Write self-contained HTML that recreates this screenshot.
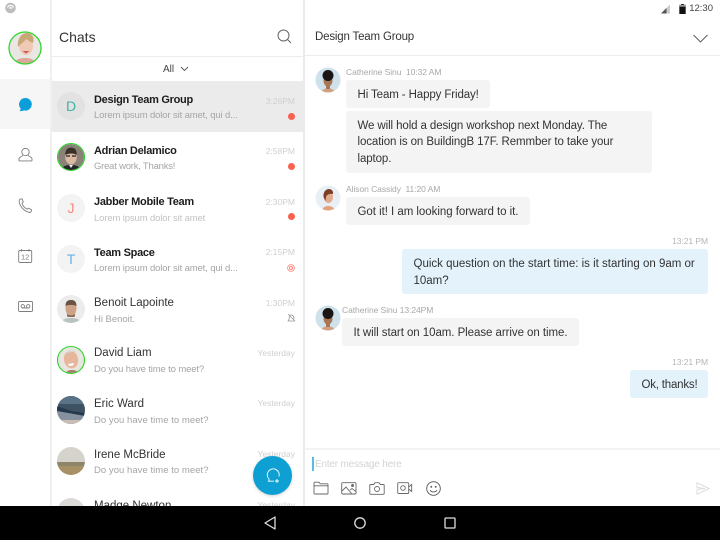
<!DOCTYPE html>
<html><head><meta charset="utf-8">
<style>
html,body{margin:0;padding:0}
body{width:720px;height:540px;overflow:hidden;background:#fff;position:relative;font-family:"Liberation Sans",sans-serif;color:#222}
.a{position:absolute;white-space:nowrap}
.n{position:absolute;left:94px;font-size:11.5px;line-height:14px;white-space:nowrap;color:#333;letter-spacing:0}
.b{font-weight:bold;font-size:11px;color:#1c1c1c;letter-spacing:-.28px}
.s{position:absolute;left:94px;font-size:9.5px;line-height:12px;color:#a5a5a5;white-space:nowrap;letter-spacing:-.02px}
.t{position:absolute;right:425px;font-size:8.5px;line-height:12px;color:#cfcfcf;white-space:nowrap}
.d{position:absolute;left:288px;width:7px;height:7px;border-radius:50%;background:#f8604f}
.l{position:absolute;left:57px;width:28px;height:28px;border-radius:50%;background:#f3f3f3;text-align:center;line-height:29px;font-size:14px}
.bub{position:absolute;background:#f4f4f4;border-radius:3px;font-size:11.5px;line-height:17px;color:#333;letter-spacing:-.08px;white-space:nowrap;box-sizing:border-box;padding:6.5px 11.5px}
.me{background:#e3f2fb}
.m{position:absolute;font-size:8.5px;line-height:11px;color:#a8a8a8;white-space:nowrap;letter-spacing:-.06px}
svg{position:absolute;overflow:visible}
.ic{fill:none;stroke:#7d7d7d;stroke-width:.9}
</style></head><body>

<!-- panels -->
<div class="a" style="left:0;top:79px;width:50px;height:50px;background:#f6f6f6"></div>
<div class="a" style="left:51px;top:81px;width:253px;height:51px;background:#ebebeb"></div>
<div class="a" style="left:50px;top:0;width:2px;height:506px;background:#f0f0f0"></div>
<div class="a" style="left:303px;top:0;width:2px;height:506px;background:#ebebeb"></div>
<div class="a" style="left:51px;top:56px;width:253px;height:1px;background:#ececec"></div>
<div class="a" style="left:305px;top:55px;width:415px;height:1px;background:#ececec"></div>
<div class="a" style="left:305px;top:448px;width:415px;height:2px;background:#f3f3f3"></div>

<!-- top-left status icon -->
<svg style="left:5px;top:2px" width="12" height="12" viewBox="0 0 12 12"><circle cx="5.500" cy="6" r="5.300" fill="#bdbdbd"/><path d="M2.500 5.500a3.200 3.200 0 0 1 6 0M4.500 6.500a1.400 1.400 0 0 1 2.500 0" fill="none" stroke="#fff" stroke-width="1.200"/></svg>

<!-- self avatar -->
<svg style="left:8px;top:31px" width="34" height="34" viewBox="0 0 34 34"><defs><clipPath id="c0"><circle cx="17" cy="17" r="15.500"/></clipPath></defs><g clip-path="url(#c0)"><rect width="34" height="34" fill="#e9e6e4"/><path d="M6 34c1-6 6-7 11-7s10 1 11 7z" fill="#dca79a"/><ellipse cx="18" cy="15" rx="7" ry="9" fill="#efc9b3"/><path d="M10 16c-1-9 4-14 9-14s8 5 6 10c-3-1-5-3-7-4-1 3-5 4-8 8z" fill="#c9a878"/><path d="M14.500 20h7l-3.500 2.500z" fill="#c85a5a"/></g><circle cx="17" cy="17" r="16" fill="none" stroke="#2fd42f" stroke-width="1.300"/></svg>

<!-- nav icons -->
<svg style="left:18px;top:97px" width="15" height="15" viewBox="0 0 15 15"><path d="M7.500 1a6.300 6.300 0 0 1 6.300 6.300A6.300 6.300 0 0 1 6 13.400c-1 .5-3 1-4.500.6.700-.7 1.200-1.600 1.200-2.500A6.300 6.300 0 0 1 7.500 1z" fill="#0b9ed8"/></svg>
<svg class="ic" style="left:18px;top:147px" width="15" height="15" viewBox="0 0 15 15"><circle cx="7.500" cy="5" r="3.700"/><path d="M5 8.300c-.3 1-3.500 1.300-4 3.300v1.800c0 .3.200.5.500.5h12c.3 0 .5-.2.500-.5v-1.800c-.5-2-3.700-2.300-4-3.300"/></svg>
<svg class="ic" style="left:18px;top:198px" width="15" height="15" viewBox="0 0 15 15"><path d="M2 1.200 4 .8c.5 1 1 2.300 1.300 3.200L4 5.200c.8 2.500 2.700 4.700 5.200 6l1.300-1.100c1 .5 2.300 1.200 3.200 1.900-.2 1-.7 2.200-1.700 2.500C6.500 13.800 1 8 1.200 2.500c0-.5.300-1 .8-1.300z"/></svg>
<svg class="ic" style="left:18px;top:249px" width="15" height="14" viewBox="0 0 15 14"><rect x=".7" y="1.500" width="13" height="12" rx="1.200"/><path d="M3.500 0v2.500M11 0v2.500"/><text x="7.200" y="10.500" font-size="7.500" text-anchor="middle" fill="#7d7d7d" stroke="none" font-family="Liberation Sans">12</text></svg>
<svg class="ic" style="left:18px;top:301px" width="15" height="11" viewBox="0 0 15 11"><rect x=".5" y=".5" width="14" height="10" rx="1.200"/><circle cx="4.800" cy="5.300" r="1.700"/><circle cx="10.200" cy="5.300" r="1.700"/><path d="M4.800 7h5.400"/></svg>

<!-- list header -->
<div class="a" style="left:59px;top:28px;font-size:14px;line-height:18px;color:#333;letter-spacing:0">Chats</div>
<svg style="left:277px;top:29px" width="15" height="15" viewBox="0 0 15 15" fill="none" stroke="#666" stroke-width="1"><circle cx="6.500" cy="6.500" r="5.500"/><path d="M10.500 10.500l3.500 3.500"/></svg>
<div class="a" style="left:163px;top:64px;font-size:10px;line-height:12px;color:#444">All</div>
<svg style="left:180px;top:66px" width="9" height="6" viewBox="0 0 9 6" fill="none" stroke="#555" stroke-width=".9"><path d="M1 1l3.500 3.500L8 1"/></svg>

<!-- rows -->
<div class="l" style="top:92px;background:#e2e2e2;color:#3fb3a6">D</div>
<div class="n b" style="top:93px">Design Team Group</div><div class="s" style="top:110px;letter-spacing:-.13px">Lorem ipsum dolor sit amet, qui d...</div><div class="t" style="top:95px">3:26PM</div><div class="d" style="top:113px"></div>

<svg style="left:57px;top:143px" width="28" height="28" viewBox="0 0 28 28"><defs><clipPath id="c1"><circle cx="14" cy="14" r="13"/></clipPath></defs><g clip-path="url(#c1)"><rect width="28" height="28" fill="#8a8178"/><path d="M4 28c1-5 5-6 10-6s9 1 10 6z" fill="#23252a"/><path d="M12 22l2 3 2-3z" fill="#eee"/><ellipse cx="14" cy="14" rx="5.800" ry="7.500" fill="#dbb8a3"/><path d="M8.200 12c0-6 3-7.500 6-7.500s5.600 1.500 5.600 7.500c-3-2-8-2-11.600 0z" fill="#3a302a"/><path d="M9 13h4M15 13h4" stroke="#222" stroke-width="1.200"/></g><circle cx="14" cy="14" r="13.500" fill="none" stroke="#2fd42f" stroke-width="1.100"/></svg>
<div class="n b" style="top:144px">Adrian Delamico</div><div class="s" style="top:161px;letter-spacing:-.22px">Great work, Thanks!</div><div class="t" style="top:145px">2:58PM</div><div class="d" style="top:163px"></div>

<div class="l" style="top:194px;color:#f58a7c">J</div>
<div class="n b" style="top:195px">Jabber Mobile Team</div><div class="s" style="top:212.500px;color:#c3c3c3;letter-spacing:-.13px">Lorem ipsum dolor sit amet</div><div class="t" style="top:196px">2:30PM</div><div class="d" style="top:213px"></div>

<div class="l" style="top:245px;color:#62b6e6">T</div>
<div class="n b" style="top:245.500px">Team Space</div><div class="s" style="top:263px;letter-spacing:-.13px">Lorem ipsum dolor sit amet, qui d...</div><div class="t" style="top:246px">2:15PM</div>
<svg style="left:286.500px;top:264px" width="8" height="8" viewBox="0 0 8 8" fill="none" stroke="#f77f73"><circle cx="4" cy="4" r="3.400" stroke-width=".8"/><circle cx="4" cy="4" r="1.500" stroke-width=".9"/></svg>

<svg style="left:57px;top:295px" width="28" height="28" viewBox="0 0 28 28"><defs><clipPath id="c2"><circle cx="14" cy="14" r="14"/></clipPath></defs><g clip-path="url(#c2)"><rect width="28" height="28" fill="#ececec"/><path d="M4 28c1-4 5-5 10-5s9 1 10 5z" fill="#b9c3c2"/><ellipse cx="14" cy="13" rx="5.500" ry="8" fill="#cda287"/><path d="M8.500 11c0-5 2.500-6 5.500-6s5.500 1 5.500 6c-3-1.500-8-1.500-11 0z" fill="#6a5244"/><path d="M9.500 18c1 3 8 3 9 0l-1 4h-7z" fill="#8b6b58"/></g></svg>
<div class="n" style="top:296px">Benoit Lapointe</div><div class="s" style="top:313.500px">Hi Benoit.</div><div class="t" style="top:297px">1:30PM</div>
<svg style="left:287px;top:313px" width="9" height="9" viewBox="0 0 9 9" fill="none" stroke="#999" stroke-width=".8"><path d="M1 8h6.500L6.800 6.800V4.500a2.500 2.500 0 0 0-4-2L1.800 6.800zM1 1l7 7"/></svg>

<svg style="left:57px;top:346px" width="28" height="28" viewBox="0 0 28 28"><defs><clipPath id="c3"><circle cx="14" cy="14" r="13"/></clipPath></defs><g clip-path="url(#c3)"><rect width="28" height="28" fill="#e9e5df"/><path d="M8 28c1-3 4-4 7-4s6 1 7 4z" fill="#a87f6c"/><ellipse cx="14" cy="13.500" rx="7" ry="9" transform="rotate(-12 14 13.500)" fill="#e6b79c"/><path d="M8 8c2-4 8-5 11-2-4 0-8 0-11 2z" fill="#d9d5cf"/><path d="M11 18l6-1-1 2.500-4 .5z" fill="#fff"/></g><circle cx="14" cy="14" r="13.500" fill="none" stroke="#2fd42f" stroke-width="1.100"/></svg>
<div class="n" style="top:346px">David Liam</div><div class="s" style="top:363.500px;letter-spacing:-.14px">Do you have time to meet?</div><div class="t" style="top:347px">Yesterday</div>

<svg style="left:57px;top:396px" width="28" height="28" viewBox="0 0 28 28"><defs><clipPath id="c4"><circle cx="14" cy="14" r="14"/></clipPath></defs><g clip-path="url(#c4)"><rect width="28" height="28" fill="#3f5263"/><rect width="28" height="8" fill="#5a7286"/><path d="M0 13l10 2 18 3v10H0z" fill="#8691a0"/><path d="M0 10l14 5 14 2v3L0 15z" fill="#24394c"/><rect y="24" width="28" height="4" fill="#cabdb5"/></g></svg>
<div class="n" style="top:397px">Eric Ward</div><div class="s" style="top:414.500px;letter-spacing:.04px">Do you have time to meet?</div><div class="t" style="top:397px">Yesterday</div>

<svg style="left:57px;top:447px" width="28" height="28" viewBox="0 0 28 28"><defs><clipPath id="c5"><circle cx="14" cy="14" r="14"/></clipPath></defs><g clip-path="url(#c5)"><rect width="28" height="28" fill="#d6d2cc"/><rect y="15" width="28" height="4" fill="#8e8568"/><rect y="19" width="28" height="9" fill="#a78f66"/></g></svg>
<div class="n" style="top:448px">Irene McBride</div><div class="s" style="top:465px;letter-spacing:.04px">Do you have time to meet?</div><div class="t" style="top:448px">Yesterday</div>

<div class="l" style="top:498px;background:#dddbd8"></div>
<div class="n" style="top:499px">Madge Newton</div><div class="t" style="top:499px">Yesterday</div>

<!-- FAB -->
<div class="a" style="left:253px;top:456px;width:39px;height:39px;border-radius:50%;background:#0ea0d2;box-shadow:0 1px 3px rgba(0,0,0,.18)"></div>
<svg style="left:265px;top:468px" width="16" height="16" viewBox="0 0 16 16" fill="none" stroke="#fff" stroke-width=".9"><path d="M9 13.200H3.500c.6-.7.800-1.300.6-2A6 6 0 1 1 14 8.500M12 11v4M10 13h4"/></svg>

<!-- status -->
<svg style="left:661px;top:4px" width="10" height="10" viewBox="0 0 10 10"><path d="M0 9.500 9 .5v9z" fill="#ccc"/><path d="M0 9.500 5.500 4v5.500z" fill="#555"/></svg>
<svg style="left:679px;top:3.500px" width="7" height="10" viewBox="0 0 7 11"><path d="M2 0h3v1h2v10H0V1h2z" fill="#111"/><rect x="0" y="1" width="7" height="2" fill="#999"/></svg>
<div class="a" style="right:7px;top:3px;font-size:9.500px;line-height:12px;color:#444;letter-spacing:0">12:30</div>

<!-- conversation header -->
<div class="a" style="left:315px;top:30px;font-size:11.500px;line-height:14px;color:#333;letter-spacing:-.18px">Design Team Group</div>
<svg style="left:693px;top:34px" width="15" height="9" viewBox="0 0 15 9" fill="none" stroke="#555" stroke-width=".9"><path d="M.5 1l7 7 7-7"/></svg>

<!-- messages -->
<svg style="left:315px;top:67px" width="26" height="26" viewBox="0 0 26 26"><defs><clipPath id="c6"><circle cx="13" cy="13" r="12.500"/></clipPath></defs><g clip-path="url(#c6)"><rect width="26" height="26" fill="#cfe1ea"/><path d="M6 26c1-4 4-4.500 7-4.500s6 .5 7 4.500z" fill="#d2a07f"/><rect x="11" y="16" width="4" height="6" fill="#a87656"/><ellipse cx="13" cy="14" rx="4.500" ry="5.500" fill="#a87656"/><circle cx="13" cy="8.500" r="5.500" fill="#1b1513"/></g></svg>
<div class="m" style="left:346px;top:67px">Catherine Sinu&nbsp; 10:32 AM</div>
<div class="bub" style="left:346px;top:80px;width:144px;height:28px;letter-spacing:-.11px">Hi Team - Happy Friday!</div>
<div class="bub" style="left:346px;top:111px;width:306px;height:62px;line-height:16.900px;padding-top:6.500px;letter-spacing:-.1px">We will hold a design workshop next Monday. The<br>location is on BuildingB 17F. Remmber to take your<br>laptop.</div>

<svg style="left:315px;top:185px" width="26" height="26" viewBox="0 0 26 26"><defs><clipPath id="c7"><circle cx="13" cy="13" r="12.500"/></clipPath></defs><g clip-path="url(#c7)"><rect width="26" height="26" fill="#e8f0f5"/><path d="M7 26c1-4 3-5 6-5s6 1 7 5z" fill="#e0a27f"/><ellipse cx="13.500" cy="12" rx="4.500" ry="6" fill="#e3ab8b"/><path d="M8.500 12c-.5-6 3-8 5.500-8s4.500 2 4 5c-3-.5-6 0-7 3l-.5 4z" fill="#7b3f28"/></g></svg>
<div class="m" style="left:346px;top:184px">Alison Cassidy&nbsp; 11:20 AM</div>
<div class="bub" style="left:346px;top:197px;width:184px;height:28px;letter-spacing:-.04px">Got it! I am looking forward to it.</div>

<div class="m" style="right:12px;top:236px;color:#b5b5b5">13:21 PM</div>
<div class="bub me" style="left:402px;top:249px;width:306px;height:45px;letter-spacing:0">Quick question on the start time: is it starting on 9am or<br>10am?</div>

<svg style="left:315px;top:305px" width="26" height="26" viewBox="0 0 26 26"><g clip-path="url(#c6)"><rect width="26" height="26" fill="#cfe1ea"/><path d="M6 26c1-4 4-4.500 7-4.500s6 .5 7 4.500z" fill="#d2a07f"/><rect x="11" y="16" width="4" height="6" fill="#a87656"/><ellipse cx="13" cy="14" rx="4.500" ry="5.500" fill="#a87656"/><circle cx="13" cy="8.500" r="5.500" fill="#1b1513"/></g></svg>
<div class="m" style="left:342px;top:305px">Catherine Sinu 13:24PM</div>
<div class="bub" style="left:342px;top:318px;width:237px;height:28px;letter-spacing:-.06px">It will start on 10am. Please arrive on time.</div>

<div class="m" style="right:12px;top:356.500px;color:#b5b5b5">13:21 PM</div>
<div class="bub me" style="left:630px;top:370px;width:78px;height:28px;letter-spacing:-.2px">Ok, thanks!</div>

<!-- input -->
<div class="a" style="left:312px;top:457px;width:2px;height:14px;background:#5bbbe6"></div>
<div class="a" style="left:315px;top:458.500px;font-size:10px;line-height:12px;color:#d4d4d4;letter-spacing:-.2px">Enter message here</div>

<svg class="ic" style="left:313px;top:481px;stroke:#666" width="16" height="14" viewBox="0 0 16 14"><path d="M1 12V2c0-.5.300-.8.800-.8h4l1.500 1.600h6.900c.5 0 .8.300.8.800v8.600c0 .5-.3.800-.8.800H1.800c-.5 0-.8-.3-.8-1zM1 4.800h14"/></svg>
<svg class="ic" style="left:341px;top:482px;stroke:#666" width="16" height="13" viewBox="0 0 16 13"><rect x=".7" y=".7" width="14.300" height="11.300" rx="1"/><path d="M1 9l4-4 5.500 6.500M9 8l2-1.500 4 3"/><circle cx="11.500" cy="3.500" r="1" fill="#666"/></svg>
<svg class="ic" style="left:369px;top:482px;stroke:#666" width="16" height="13" viewBox="0 0 16 13"><path d="M1.700 2.500h3L6 .7h4l1.300 1.800h3c.5 0 .9.400.9.900v8c0 .5-.4.900-.9.900H1.700c-.5 0-.9-.4-.9-.9v-8c0-.5.400-.9.900-.9z"/><circle cx="8" cy="7" r="2.500"/></svg>
<svg class="ic" style="left:397px;top:482px;stroke:#666" width="16" height="12" viewBox="0 0 16 12"><rect x=".7" y=".7" width="11" height="10.800" rx="1"/><circle cx="6" cy="6" r="2.300"/><path d="M11.700 5l3-2.500v7l-3-2.500"/></svg>
<svg class="ic" style="left:426px;top:481px;stroke:#555" width="15" height="15" viewBox="0 0 15 15"><circle cx="7.500" cy="7.500" r="6.800"/><path d="M4.200 9c.8 2.600 5.800 2.600 6.600 0"/><circle cx="5.300" cy="5.800" r=".5" fill="#555"/><circle cx="9.700" cy="5.800" r=".5" fill="#555"/></svg>
<svg style="left:696px;top:482px" width="14" height="13" viewBox="0 0 14 13" fill="none" stroke="#dcdcdc" stroke-width="1"><path d="M1 .8 13 6.500 1 12.200V7.500l8-1-8-1z"/></svg>

<!-- nav bar -->
<div class="a" style="left:0;top:506px;width:720px;height:34px;background:#000"></div>
<svg style="left:264px;top:516px" width="12" height="14" viewBox="0 0 12 14" fill="none" stroke="#ddd" stroke-width="1.300"><path d="M11 1v12L1 7z" stroke-linejoin="round"/></svg>
<svg style="left:354px;top:517px" width="12" height="12" viewBox="0 0 12 12" fill="none" stroke="#ddd" stroke-width="1.300"><circle cx="6" cy="6" r="5.200"/></svg>
<svg style="left:444px;top:517px" width="12" height="12" viewBox="0 0 12 12" fill="none" stroke="#ddd" stroke-width="1.300"><rect x="1" y="1" width="10" height="10" rx=".8"/></svg>
</body></html>
